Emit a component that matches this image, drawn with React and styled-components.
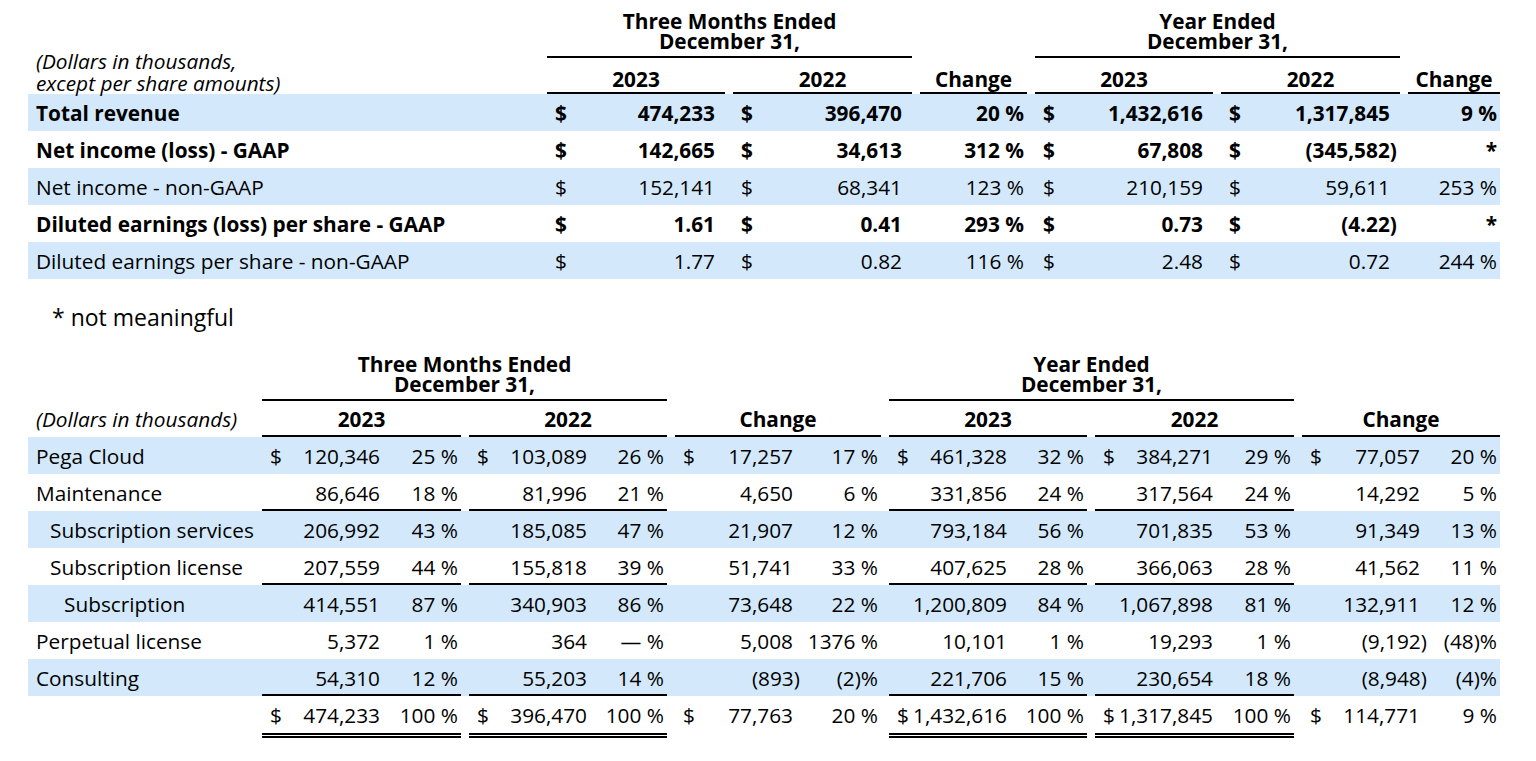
import React from 'react';
import styled, { createGlobalStyle } from 'styled-components';

const GlobalStyle = createGlobalStyle`
	body {
		margin: 0;
		background: #fff;
		color: #000;
		font-family: 'Open Sans', 'DejaVu Sans', sans-serif;
		font-size: 20.8px;
	}
`;

const SHADE = '#d3e9fb';
const COLS_1 = '511px 178px 179px 107px 178px 179px 92px';
const COLS_2 = '226px 199px 198px 206px 198px 199px 198px';

const Page = styled.div`
	width: 1536px;
	height: 761px;
	box-sizing: border-box;
	padding: 12px 36px 0 28px;
	overflow: hidden;
`;

const Table = styled.section`
	width: 1472px;
`;

const Head = styled.div`
	display: grid;
	grid-template-columns: ${p => p.$cols};
	column-gap: 8px;
	font-weight: 700;
`;

const Caption = styled.div`
	grid-column: 1;
	grid-row: ${p => (p.$tall ? '1 / 3' : '2')};
	align-self: ${p => (p.$tall ? 'end' : 'start')};
	padding: ${p => (p.$tall ? '0' : '7px')} 0 0 8px;
	font-style: italic;
	font-weight: 400;
	line-height: ${p => (p.$tall ? '22px' : '23px')};
`;

const Period = styled.div`
	grid-row: 1;
	grid-column: ${p => p.$col};
	text-align: center;
	line-height: 19.5px;
	padding-bottom: 5px;
	border-bottom: 2px solid #000;
`;

const Year = styled.div`
	grid-row: 2;
	grid-column: ${p => p.$col};
	text-align: center;
	line-height: 23px;
	padding: ${p => p.$pad};
	border-bottom: 2px solid #000;
`;

const Row = styled.div`
	display: grid;
	grid-template-columns: ${p => p.$cols};
	column-gap: 8px;
	height: ${p => (p.$total ? '42px' : '37px')};
	background: ${p => (p.$shaded ? SHADE : 'transparent')};
	font-weight: ${p => (p.$bold ? 700 : 400)};
	line-height: 24px;
`;

const Label = styled.div`
	display: flex;
	align-items: center;
	height: 37px;
	padding-left: ${p => 8 + p.$indent * 14}px;
	white-space: nowrap;
`;

const Money = styled.div`
	display: flex;
	justify-content: space-between;
	align-items: center;
	padding: 0 10px 0 8px;
`;

const ChangeCell = styled.div`
	display: flex;
	justify-content: flex-end;
	align-items: center;
	padding-right: 3px;
`;

const RULES = {
	single: '2px solid #000',
	double: '5px double #000',
	blank: '5px solid transparent'
};

const Group = styled.div`
	display: grid;
	grid-template-columns: 118px 1fr;
	align-items: center;
	height: 100%;
	box-sizing: border-box;
	padding-top: ${p => (p.$rule === 'single' ? '2px' : '0')};
	border-bottom: ${p => RULES[p.$rule] || 'none'};
`;

const Amount = styled.div`
	display: flex;
	justify-content: space-between;
	padding-left: 8px;
`;

const Pct = styled.div`
	text-align: right;
	padding-right: 3px;
	white-space: nowrap;
`;

const Hang = styled.span`
	margin-right: -0.33em;
`;

const Note = styled.p`
	margin: 23px 0 22px;
	padding-left: 24px;
	font-size: 23px;
	line-height: 31px;
`;

const Figure = ({ v }) =>
	v.startsWith('(') && v.endsWith(')') ? (
		<span>
			{v.slice(0, -1)}
			<Hang>)</Hang>
		</span>
	) : (
		<span>{v}</span>
	);

const summary = [
	{ label: 'Total revenue', bold: true, shaded: true, vals: ['474,233', '396,470', '20 %', '1,432,616', '1,317,845', '9 %'] },
	{ label: 'Net income (loss) - GAAP', bold: true, vals: ['142,665', '34,613', '312 %', '67,808', '(345,582)', '*'] },
	{ label: 'Net income - non-GAAP', shaded: true, vals: ['152,141', '68,341', '123 %', '210,159', '59,611', '253 %'] },
	{ label: 'Diluted earnings (loss) per share - GAAP', bold: true, vals: ['1.61', '0.41', '293 %', '0.73', '(4.22)', '*'] },
	{ label: 'Diluted earnings per share - non-GAAP', shaded: true, vals: ['1.77', '0.82', '116 %', '2.48', '0.72', '244 %'] }
];

const revenue = [
	{ label: 'Pega Cloud', indent: 0, shaded: true, dollar: true, vals: [['120,346', '25 %'], ['103,089', '26 %'], ['17,257', '17 %'], ['461,328', '32 %'], ['384,271', '29 %'], ['77,057', '20 %']] },
	{ label: 'Maintenance', indent: 0, rule: 'single', vals: [['86,646', '18 %'], ['81,996', '21 %'], ['4,650', '6 %'], ['331,856', '24 %'], ['317,564', '24 %'], ['14,292', '5 %']] },
	{ label: 'Subscription services', indent: 1, shaded: true, vals: [['206,992', '43 %'], ['185,085', '47 %'], ['21,907', '12 %'], ['793,184', '56 %'], ['701,835', '53 %'], ['91,349', '13 %']] },
	{ label: 'Subscription license', indent: 1, rule: 'single', vals: [['207,559', '44 %'], ['155,818', '39 %'], ['51,741', '33 %'], ['407,625', '28 %'], ['366,063', '28 %'], ['41,562', '11 %']] },
	{ label: 'Subscription', indent: 2, shaded: true, vals: [['414,551', '87 %'], ['340,903', '86 %'], ['73,648', '22 %'], ['1,200,809', '84 %'], ['1,067,898', '81 %'], ['132,911', '12 %']] },
	{ label: 'Perpetual license', indent: 0, vals: [['5,372', '1 %'], ['364', '— %'], ['5,008', '1376 %'], ['10,101', '1 %'], ['19,293', '1 %'], ['(9,192)', '(48)%']] },
	{ label: 'Consulting', indent: 0, shaded: true, rule: 'single', vals: [['54,310', '12 %'], ['55,203', '14 %'], ['(893)', '(2)%'], ['221,706', '15 %'], ['230,654', '18 %'], ['(8,948)', '(4)%']] },
	{ label: '', indent: 0, total: true, dollar: true, rule: 'double', vals: [['474,233', '100 %'], ['396,470', '100 %'], ['77,763', '20 %'], ['1,432,616', '100 %'], ['1,317,845', '100 %'], ['114,771', '9 %']] }
];

const isChange = i => i === 2 || i === 5;

// change columns carry no rules; in the total row they keep the same inner height
const ruleFor = (row, i) => {
	if (!isChange(i)) return row.rule;
	return row.total ? 'blank' : null;
};

const SummaryTable = () => (
	<Table>
		<Head $cols={COLS_1}>
			<Caption $tall>
				(Dollars in thousands,
				<br />
				except per share amounts)
			</Caption>
			<Period $col="2 / 4">
				Three Months Ended
				<br />
				December 31,
			</Period>
			<Period $col="5 / 7">
				Year Ended
				<br />
				December 31,
			</Period>
			{['2023', '2022', 'Change', '2023', '2022', 'Change'].map((y, i) => (
				<Year key={i} $col={i + 2} $pad="10px 0 1px">
					{y}
				</Year>
			))}
		</Head>
		{summary.map(row => (
			<Row key={row.label} $cols={COLS_1} $shaded={row.shaded} $bold={row.bold}>
				<Label $indent={0}>{row.label}</Label>
				{row.vals.map((v, i) =>
					isChange(i) ? (
						<ChangeCell key={i}>{v}</ChangeCell>
					) : (
						<Money key={i}>
							<span>$</span>
							<Figure v={v} />
						</Money>
					)
				)}
			</Row>
		))}
	</Table>
);

const RevenueTable = () => (
	<Table>
		<Head $cols={COLS_2}>
			<Caption>(Dollars in thousands)</Caption>
			<Period $col="2 / 4">
				Three Months Ended
				<br />
				December 31,
			</Period>
			<Period $col="5 / 7">
				Year Ended
				<br />
				December 31,
			</Period>
			{['2023', '2022', 'Change', '2023', '2022', 'Change'].map((y, i) => (
				<Year key={i} $col={i + 2} $pad="7px 0 4px">
					{y}
				</Year>
			))}
		</Head>
		{revenue.map((row, r) => (
			<Row key={r} $cols={COLS_2} $shaded={row.shaded} $total={row.total}>
				<Label $indent={row.indent}>{row.label}</Label>
				{row.vals.map(([amount, pct], i) => (
					<Group key={i} $rule={ruleFor(row, i)}>
						<Amount>
							<span>{row.dollar ? '$' : ''}</span>
							<Figure v={amount} />
						</Amount>
						<Pct>{pct}</Pct>
					</Group>
				))}
			</Row>
		))}
	</Table>
);

const App = () => (
	<>
		<GlobalStyle />
		<Page>
			<SummaryTable />
			<Note>* not meaningful</Note>
			<RevenueTable />
		</Page>
	</>
);

export default App;
